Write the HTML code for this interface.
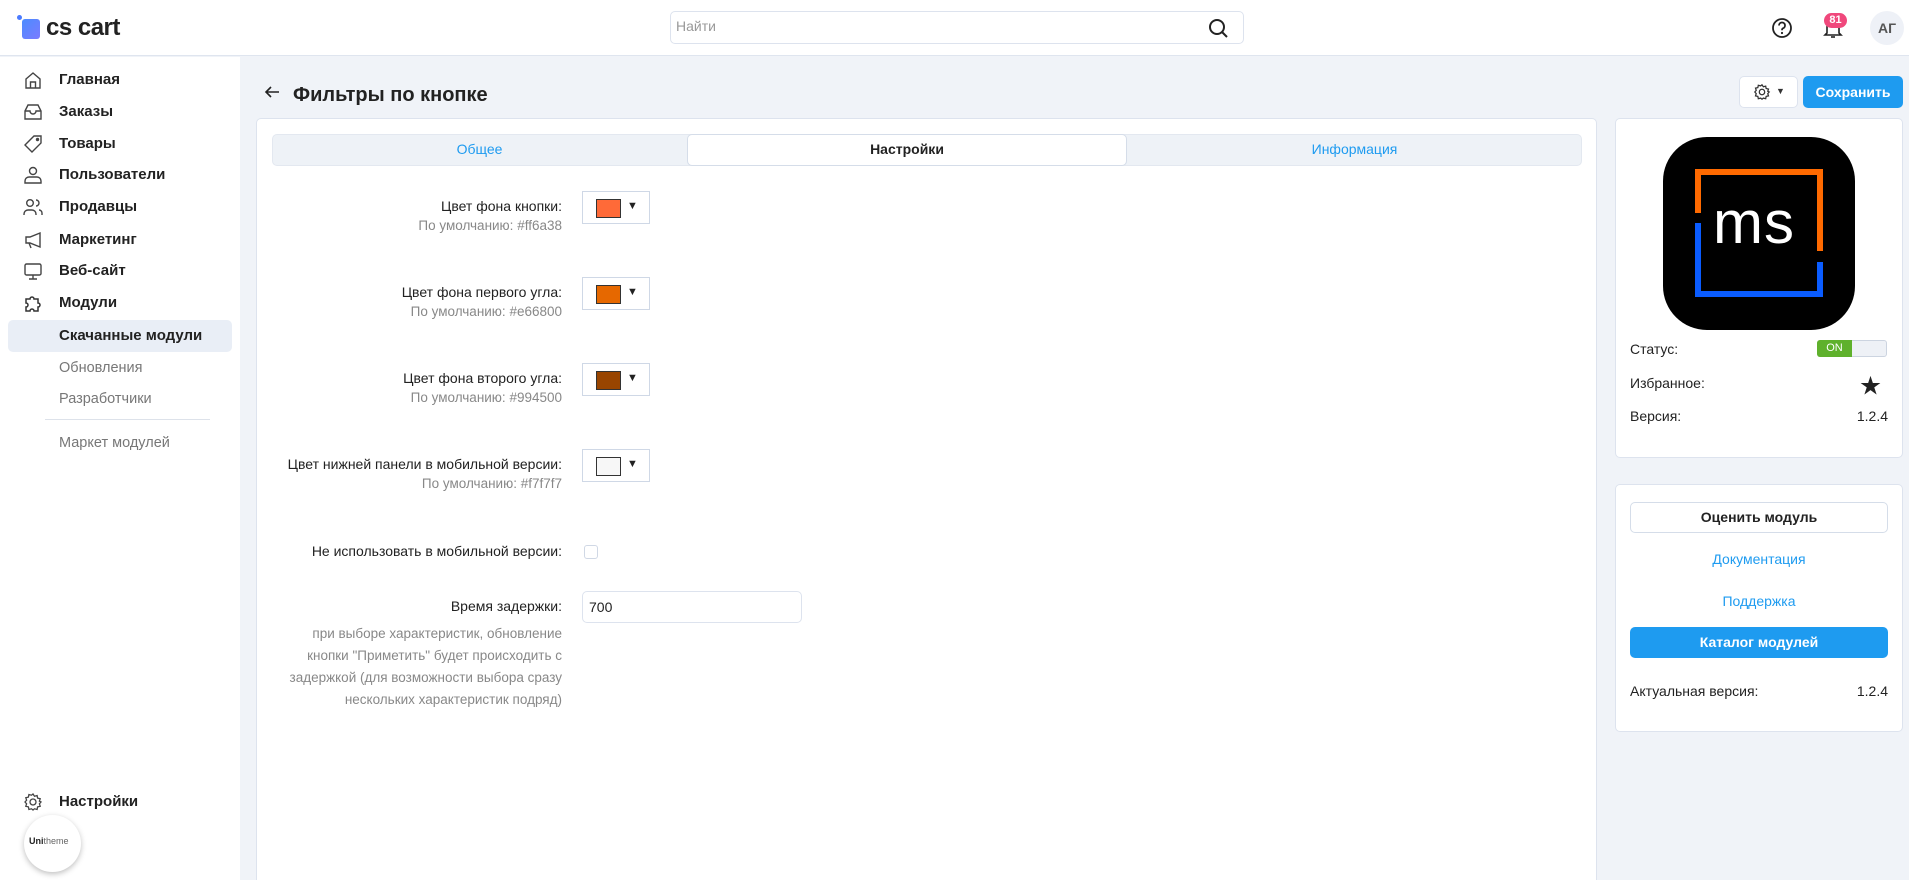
<!DOCTYPE html>
<html style="width:1909px;height:880px;overflow:hidden"><head><meta charset="utf-8"><style>
*{box-sizing:border-box;margin:0;padding:0}
body{width:1909px;height:880px;overflow:hidden;background:#f0f3f8;font-family:"Liberation Sans","Noto Sans CJK SC",sans-serif;color:#222;position:relative;font-size:14px}
.a{position:absolute}
.hdr{left:0;top:0;width:1909px;height:56px;background:#fff;border-bottom:1px solid #dfe5ef}
.side{left:0;top:57px;width:240px;height:823px;background:#fff}
.nav{left:59px;font-size:15px;font-weight:bold;color:#222;line-height:20px}
.ico{left:23px;width:20px;height:20px}
.sub{left:59px;font-size:14.5px;color:#777;line-height:20px}
.card{background:#fff;border:1px solid #dde3ee;border-radius:5px}
.lbl{right:1347px;text-align:right;font-size:14px;line-height:20px;color:#222;white-space:nowrap}
.def{right:1347px;text-align:right;font-size:13.5px;color:#888;line-height:20px;white-space:nowrap}
.cp{left:582px;width:68px;height:33px;border:1px solid #cfd8e6;background:#fff}
.cp .sw{position:absolute;left:13px;top:7px;width:25px;height:19px;border:1px solid #333}
.cp .ar{position:absolute;left:44px;top:8px;font-size:11px}
.row{left:1630px;width:258px;font-size:14px;line-height:20px}
</style></head><body>
<div class="a hdr"></div>
<div class="a" style="left:17px;top:15px;width:5px;height:5px;border-radius:50%;background:#4b7bff"></div>
<div class="a" style="left:22px;top:19px;width:18px;height:20px;border-radius:3px;background:linear-gradient(135deg,#4b8cff,#7b7bff)"></div>
<div class="a" style="left:46px;top:12px;font-size:24px;color:#222;letter-spacing:-0.5px;line-height:32px;font-weight:bold">cs cart</div>
<div class="a" style="left:670px;top:11px;width:574px;height:33px;border:1px solid #dde3ee;border-radius:5px;background:#fff"></div>
<div class="a" style="left:676px;top:18px;font-size:14px;color:#999">Найти</div>
<svg class="a" style="left:1207px;top:17px" width="22" height="22" viewBox="0 0 22 22"><circle cx="10" cy="10" r="7" fill="none" stroke="#222" stroke-width="2"/><path d="M15 15l5 5" stroke="#222" stroke-width="2"/></svg>
<svg class="a" style="left:1771px;top:17px" width="22" height="22" viewBox="0 0 22 22"><circle cx="11" cy="11" r="9" fill="none" stroke="#222" stroke-width="1.8"/><path d="M8 8.5a3 3 0 1 1 4 2.8c-1 .4-1 1-1 2" fill="none" stroke="#222" stroke-width="1.8"/><circle cx="11" cy="16" r="1.1" fill="#222"/></svg>
<svg class="a" style="left:1823px;top:17px" width="20" height="22" viewBox="0 0 20 22"><path d="M4 16V10a6 6 0 0 1 12 0v6l2 2H2z" fill="none" stroke="#222" stroke-width="1.6"/><path d="M8 20h4" stroke="#222" stroke-width="1.6"/></svg>
<div class="a" style="left:1824px;top:13px;width:23px;height:15px;border-radius:8px;background:#f0487c;color:#fff;font-size:11px;font-weight:bold;text-align:center;line-height:15px">81</div>
<div class="a" style="left:1870px;top:11px;width:34px;height:34px;border-radius:50%;background:#eef1f7;color:#555;font-weight:bold;font-size:14px;text-align:center;line-height:34px">АГ</div>

<div class="a side"></div>
<div class="a" style="left:8px;top:320px;width:224px;height:32px;background:#e9eef6;border-radius:5px"></div>
<svg class="a ico" style="top:70px" viewBox="0 0 20 20" fill="none" stroke="#444" stroke-width="1.4"><path d="M3 9l7-6 7 6v9H3z"/><path d="M7.5 18v-6h5v6"/></svg>
<svg class="a ico" style="top:102px" viewBox="0 0 20 20" fill="none" stroke="#444" stroke-width="1.4"><path d="M2 9l3-6h10l3 6v8H2z"/><path d="M2 9h5a3 3 0 0 0 6 0h5"/></svg>
<svg class="a ico" style="top:134px" viewBox="0 0 20 20" fill="none" stroke="#444" stroke-width="1.4"><path d="M11 2h7v7l-9 9-7-7z"/><circle cx="14.5" cy="5.5" r="1" fill="#444"/></svg>
<svg class="a ico" style="top:165px" viewBox="0 0 20 20" fill="none" stroke="#444" stroke-width="1.4"><circle cx="10" cy="6" r="3.5"/><path d="M2 18v-2a4 4 0 0 1 4-4h8a4 4 0 0 1 4 4v2z"/></svg>
<svg class="a ico" style="top:197px" viewBox="0 0 20 20" fill="none" stroke="#444" stroke-width="1.4"><circle cx="7" cy="6" r="3.3"/><path d="M1 18v-1a4 4 0 0 1 4-4h4a4 4 0 0 1 4 4v1M13 3a3 3 0 0 1 0 6M16 13a3 3 0 0 1 3 3v2"/></svg>
<svg class="a ico" style="top:230px" viewBox="0 0 20 20" fill="none" stroke="#444" stroke-width="1.4"><path d="M3 7h4l10-4v14L7 13H3z"/><path d="M6 13l2 5"/></svg>
<svg class="a ico" style="top:261px" viewBox="0 0 20 20" fill="none" stroke="#444" stroke-width="1.4"><rect x="2" y="3" width="16" height="11" rx="1.5"/><path d="M10 14v4M6 18h8"/></svg>
<svg class="a ico" style="top:293px" viewBox="0 0 20 20" fill="none" stroke="#333" stroke-width="1.5"><path d="M3 6h4a2 2 0 1 1 4 0h4v4a2 2 0 1 1 0 4v4h-4a2 2 0 1 0-4 0H3v-4a2 2 0 1 0 0-4z"/></svg>
<div class="a nav" style="top:70px">Главная</div>
<div class="a nav" style="top:102px">Заказы</div>
<div class="a nav" style="top:134px">Товары</div>
<div class="a nav" style="top:165px">Пользователи</div>
<div class="a nav" style="top:197px">Продавцы</div>
<div class="a nav" style="top:230px">Маркетинг</div>
<div class="a nav" style="top:261px">Веб-сайт</div>
<div class="a nav" style="top:293px">Модули</div>
<div class="a nav" style="top:326px">Скачанные модули</div>
<div class="a sub" style="top:358px">Обновления</div>
<div class="a sub" style="top:389px">Разработчики</div>
<div class="a" style="left:45px;top:419px;width:165px;height:1px;background:#dde2ea"></div>
<div class="a sub" style="top:433px">Маркет модулей</div>
<svg class="a ico" style="top:792px" viewBox="0 0 20 20" fill="none" stroke="#444" stroke-width="1.3"><circle cx="10" cy="10" r="3"/><path d="M10 2l1.5 2.2 2.6-.7.5 2.6 2.6.6-.8 2.5L18 10l-1.6 1.8.8 2.5-2.6.6-.5 2.6-2.6-.7L10 18l-1.5-1.2-2.6.7-.5-2.6-2.6-.6.8-2.5L2 10l1.6-1.8-.8-2.5 2.6-.6.5-2.6 2.6.7z"/></svg>
<div class="a nav" style="top:792px">Настройки</div>
<div class="a" style="left:24px;top:815px;width:57px;height:57px;border-radius:50%;background:#fff;box-shadow:0 2px 6px rgba(0,0,0,.25)"></div>
<div class="a" style="left:29px;top:836px;font-size:9px;color:#222"><b>Uni</b><span style="color:#666">theme</span></div>

<svg class="a" style="left:264px;top:84px" width="16" height="16" viewBox="0 0 16 16"><path d="M15 8H2M7 3L2 8l5 5" fill="none" stroke="#222" stroke-width="1.6"/></svg>
<div class="a" style="left:293px;top:82px;font-size:20px;font-weight:bold;color:#222;line-height:26px">Фильтры по кнопке</div>
<div class="a" style="left:1739px;top:76px;width:59px;height:32px;background:#fff;border:1px solid #dde3ee;border-radius:5px"></div>
<svg class="a" style="left:1753px;top:83px" width="18" height="18" viewBox="0 0 20 20" fill="none" stroke="#333" stroke-width="1.4"><circle cx="10" cy="10" r="3"/><path d="M10 2l1.5 2.2 2.6-.7.5 2.6 2.6.6-.8 2.5L18 10l-1.6 1.8.8 2.5-2.6.6-.5 2.6-2.6-.7L10 18l-1.5-1.2-2.6.7-.5-2.6-2.6-.6.8-2.5L2 10l1.6-1.8-.8-2.5 2.6-.6.5-2.6 2.6.7z"/></svg>
<div class="a" style="left:1776px;top:86px;font-size:9px;color:#333">▼</div>
<div class="a" style="left:1803px;top:76px;width:100px;height:32px;background:#1e9bf0;border-radius:5px;color:#fff;font-weight:bold;font-size:14px;text-align:center;line-height:32px">Сохранить</div>

<div class="a card" style="left:256px;top:118px;width:1341px;height:770px"></div>
<div class="a" style="left:272px;top:134px;width:1310px;height:32px;background:#eef2f7;border-radius:5px;border:1px solid #e3e8f0"></div>
<div class="a" style="left:687px;top:134px;width:440px;height:32px;background:#fff;border:1px solid #d5dde9;border-radius:5px"></div>
<div class="a" style="left:272px;top:141px;width:415px;text-align:center;color:#1e9bf0;font-size:14px">Общее</div>
<div class="a" style="left:687px;top:141px;width:440px;text-align:center;font-weight:bold;font-size:14px">Настройки</div>
<div class="a" style="left:1127px;top:141px;width:455px;text-align:center;color:#1e9bf0;font-size:14px">Информация</div>

<div class="a lbl" style="top:196px">Цвет фона кнопки:</div>
<div class="a def" style="top:216px">По умолчанию: #ff6a38</div>
<div class="a cp" style="top:191px"><div class="sw" style="background:#ff6a38"></div><div class="ar">▼</div></div>
<div class="a lbl" style="top:282px">Цвет фона первого угла:</div>
<div class="a def" style="top:302px">По умолчанию: #e66800</div>
<div class="a cp" style="top:277px"><div class="sw" style="background:#e66800"></div><div class="ar">▼</div></div>
<div class="a lbl" style="top:368px">Цвет фона второго угла:</div>
<div class="a def" style="top:388px">По умолчанию: #994500</div>
<div class="a cp" style="top:363px"><div class="sw" style="background:#994500"></div><div class="ar">▼</div></div>
<div class="a lbl" style="top:454px">Цвет нижней панели в мобильной версии:</div>
<div class="a def" style="top:474px">По умолчанию: #f7f7f7</div>
<div class="a cp" style="top:449px"><div class="sw" style="background:#f7f7f7"></div><div class="ar">▼</div></div>
<div class="a lbl" style="top:541px">Не использовать в мобильной версии:</div>
<div class="a" style="left:584px;top:545px;width:14px;height:14px;border:1.5px solid #d0d8e5;border-radius:3px;background:#fff"></div>
<div class="a lbl" style="top:596px">Время задержки:</div>
<div class="a" style="left:582px;top:591px;width:220px;height:32px;border:1px solid #dde3ee;border-radius:5px;background:#fff;padding:7px 6px;font-size:14px">700</div>
<div class="a def" style="top:623px;line-height:22px;text-align:right;color:#888">при выборе характеристик, обновление<br>кнопки "Приметить" будет происходить с<br>задержкой (для возможности выбора сразу<br>нескольких характеристик подряд)</div>

<div class="a card" style="left:1615px;top:118px;width:288px;height:340px"></div>
<div class="a" style="left:1663px;top:137px;width:192px;height:193px;border-radius:44px;background:#000"></div>
<div class="a" style="left:1695px;top:169px;width:128px;height:6px;background:#ff6a00"></div>
<div class="a" style="left:1695px;top:169px;width:6px;height:44px;background:#ff6a00"></div>
<div class="a" style="left:1817px;top:169px;width:6px;height:82px;background:#ff6a00"></div>
<div class="a" style="left:1695px;top:223px;width:6px;height:74px;background:#0a5cff"></div>
<div class="a" style="left:1695px;top:291px;width:128px;height:6px;background:#0a5cff"></div>
<div class="a" style="left:1817px;top:262px;width:6px;height:35px;background:#0a5cff"></div>
<div class="a" style="left:1713px;top:193px;font-size:60px;color:#fff;line-height:60px;letter-spacing:1px">ms</div>
<div class="a row" style="top:339px">Статус:</div>
<div class="a" style="left:1817px;top:340px;width:70px;height:17px;border:1px solid #ccd4e0;border-radius:3px;background:#eef1f6"></div>
<div class="a" style="left:1817px;top:340px;width:35px;height:17px;background:#5fb12c;border-radius:3px 0 0 3px;color:#fff;font-size:11px;text-align:center;line-height:17px">ON</div>
<div class="a row" style="top:373px">Избранное:</div>
<div class="a" style="left:1860px;top:370px;font-size:21px">★</div>
<div class="a row" style="top:406px">Версия:<span style="float:right">1.2.4</span></div>

<div class="a card" style="left:1615px;top:484px;width:288px;height:248px"></div>
<div class="a" style="left:1630px;top:502px;width:258px;height:31px;border:1px solid #d5dde9;border-radius:5px;background:#fff;text-align:center;line-height:29px;font-weight:bold;font-size:14px">Оценить модуль</div>
<div class="a row" style="top:549px;text-align:center;color:#1e9bf0">Документация</div>
<div class="a row" style="top:591px;text-align:center;color:#1e9bf0">Поддержка</div>
<div class="a" style="left:1630px;top:627px;width:258px;height:31px;border-radius:5px;background:#1e9bf0;color:#fff;text-align:center;line-height:31px;font-weight:bold;font-size:14px">Каталог модулей</div>
<div class="a row" style="top:681px">Актуальная версия:<span style="float:right">1.2.4</span></div>
</body></html>
